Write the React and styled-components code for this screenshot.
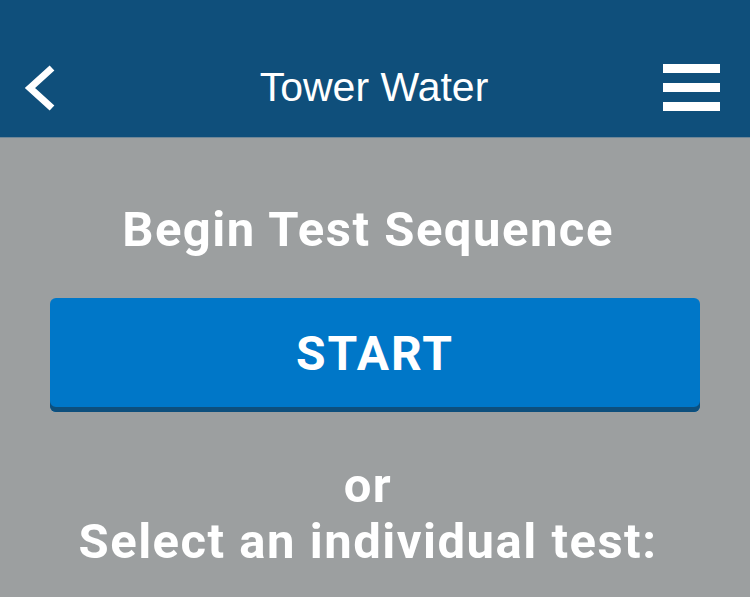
import React from "react";
import styled, {createGlobalStyle} from "styled-components";

const GlobalStyle = createGlobalStyle`
	html, body {
		margin: 0;
		padding: 0;
		background: #9c9fa0;
	}
	* {
		box-sizing: border-box;
	}
`;

function App() {
	return (
		<Page>
			<GlobalStyle />
			<Header>
				<IconButton aria-label="Back">
					<svg width="36" height="50" viewBox="0 0 36 50">
						<polyline points="30,5 8,25 30,45" fill="none" stroke="#fff" strokeWidth="7" strokeLinejoin="miter" />
					</svg>
				</IconButton>
				<Title>Tower Water</Title>
				<IconButton $end aria-label="Menu">
					<Burger>
						<span />
						<span />
						<span />
					</Burger>
				</IconButton>
			</Header>
			<Content>
				<Heading>Begin Test Sequence</Heading>
				<StartButton>START</StartButton>
				<Heading $top={46}>
					or
					<br />
					Select an individual test:
				</Heading>
			</Content>
		</Page>
	);
}

export default App;

const Page = styled.div`
	width: 750px;
	min-height: 597px;
	background: #9c9fa0;
	overflow: hidden;
`;

const Header = styled.div`
	height: 138px;
	background: #0f4f7b;
	display: grid;
	grid-template-columns: 1fr auto 1fr;
	align-items: center;
	padding: 38px 30px 0 22px;
	border-bottom: 1px solid #6f8798;
`;

const IconButton = styled.div`
	display: flex;
	align-items: center;
	justify-content: ${(p) => (p.$end ? "flex-end" : "flex-start")};
	cursor: pointer;
`;

const Title = styled.div`
	font-family: "Liberation Sans", Arial, sans-serif;
	font-size: 41px;
	color: #fff;
	padding-left: 6px;
`;

const Burger = styled.div`
	display: flex;
	flex-direction: column;
	gap: 10px;
	span {
		display: block;
		width: 57px;
		height: 9px;
		background: #fff;
	}
`;

const Content = styled.div`
	display: flex;
	flex-direction: column;
	align-items: center;
	padding: 64px 50px 0;
`;

const Heading = styled.div`
	font-family: Roboto, "Open Sans", sans-serif;
	font-weight: 700;
	font-size: 49px;
	line-height: 56px;
	letter-spacing: 1.5px;
	color: #fff;
	text-align: center;
	margin-top: ${(p) => p.$top || 0}px;
	margin-right: 14px;
`;

const StartButton = styled.div`
	margin-top: 40px;
	width: 650px;
	height: 114px;
	background: #0077c8;
	border-radius: 6px;
	box-shadow: inset 0 -5px 0 #0d4f7d;
	display: flex;
	align-items: center;
	justify-content: center;
	padding-bottom: 4px;
	font-family: Roboto, "Open Sans", sans-serif;
	font-weight: 700;
	font-size: 48px;
	letter-spacing: 2px;
	color: #fff;
	cursor: pointer;
`;
